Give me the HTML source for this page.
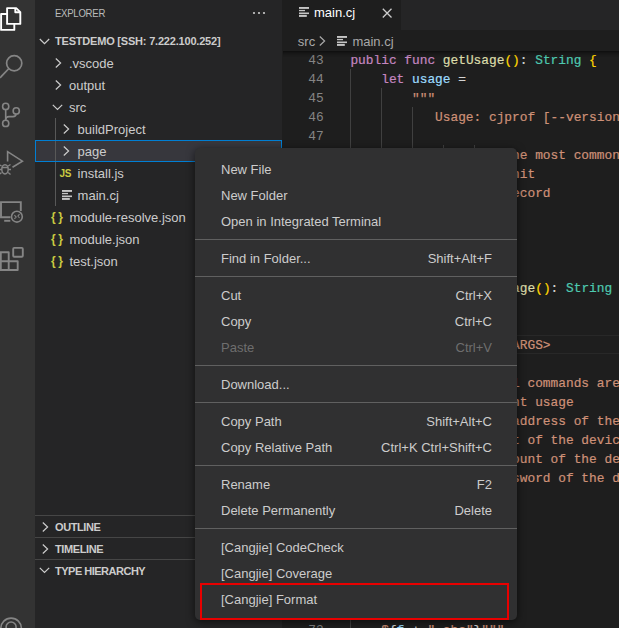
<!DOCTYPE html>
<html><head><meta charset="utf-8">
<style>
*{margin:0;padding:0;box-sizing:border-box}
html,body{width:619px;height:628px;overflow:hidden;background:#1e1e1e}
body{position:relative;font-family:"Liberation Sans",sans-serif;font-size:13px;color:#cccccc}
.abs{position:absolute}
#act{left:0;top:0;width:35px;height:628px;background:#333333}
#side{left:35px;top:0;width:247px;height:628px;background:#252526}
#editor{left:283px;top:0;width:336px;height:628px;background:#1e1e1e;overflow:hidden}
.t{position:absolute;margin-top:1px;white-space:nowrap;line-height:22px;height:22px}
.hdr{margin-top:0 !important;font-size:11px;font-weight:bold;color:#cccccc}
.sec{position:absolute;left:0;width:247px;height:22px;border-top:1px solid #464646}
.code{position:absolute;margin-top:1px;-webkit-text-stroke:0.2px;left:67.4px;font-family:"Liberation Mono",monospace;font-size:12.83px;white-space:pre;line-height:19px;height:19px;color:#d4d4d4}
.ln{position:absolute;margin-top:1px;left:0;width:40.6px;text-align:right;font-family:"Liberation Mono",monospace;font-size:12.83px;line-height:19px;height:19px;color:#858585}
.k{color:#c586c0}.f{color:#dcdcaa}.b{color:#ffd700}.ty{color:#4ec9b0}.v{color:#9cdcfe}.s{color:#ce9178}.p{color:#d4d4d4}
.g{position:absolute;width:1px;background:#404040}
#menu{left:195px;top:148px;width:322px;height:472px;background:#303031;border-radius:5px;box-shadow:0 2px 8px rgba(0,0,0,0.6)}
.mi{position:absolute;left:0;width:322px;height:26px;line-height:26px}
.mi .l{position:absolute;left:26px;top:1px}
.mi .r{position:absolute;right:25px;top:1px}
.mi.dis{color:#6e6e6e}
.sep{position:absolute;left:0;width:322px;height:1px;background:#606060}
#red{left:200px;top:583px;width:309px;height:37px;border:2.5px solid #e80000}
</style></head><body>
<div id="act" class="abs"><svg width="35" height="628" style="position:absolute;left:0;top:0">
<g fill="none" stroke="#ffffff" stroke-width="1.9" stroke-linejoin="round">
<path d="M7.1,8.1 H16.2 L20.3,12.2 V23.9 H7.1 Z"/>
<path d="M15.3,8.4 V12.3 H20" stroke-width="1.9"/>
<path d="M7.1,14 H1.1 V29.9 H14.3 V24"/>
</g>
<g fill="none" stroke="#858585" stroke-width="1.7">
<circle cx="14.2" cy="63.2" r="7.6"/>
<line x1="8.9" y1="68.5" x2="0" y2="77.8"/>
<circle cx="5.7" cy="106.4" r="3.1" stroke-width="1.6"/>
<circle cx="5.7" cy="123.4" r="3.1" stroke-width="1.6"/>
<circle cx="16.25" cy="110.9" r="3.1" stroke-width="1.6"/>
<path d="M5.7,109.5 V120.3" stroke-width="1.6"/>
<path d="M16.1,114 Q16,116.6 13,116.6 H9 Q5.8,116.6 5.7,119.5" stroke-width="1.6"/>
<path d="M7.6,161.5 V151.6 L22.4,161.2 L12.5,167.3" stroke-width="1.6" stroke-linejoin="miter"/>
<ellipse cx="5" cy="169.3" rx="3.2" ry="4.6" stroke-width="1.5"/>
<path d="M1.8,167.5 H8.2 M8.2,166 L10.5,164.5 M8.5,169.5 H11 M8.2,172.5 L10.5,174.5 M0,169.5 H1.8 M0,165 L1.5,166 M0,174 L1.5,172.5" stroke-width="1.3"/>
<path d="M10.5,217.2 H1 V202.1 H20.8 V211" stroke-width="1.9" stroke-linejoin="miter"/>
<path d="M4.2,220.8 H10.3" stroke-width="1.9"/>
<circle cx="16.9" cy="216.7" r="5.4" stroke-width="1.6"/>
<path d="M14.4,215.1 L16.2,217 L14.4,218.9 M19.5,214.2 L17.9,216.1 L19.5,218" stroke-width="1.1"/>
<rect x="13.2" y="247.9" width="9.6" height="8.8" rx="1" stroke-width="1.9"/>
<path d="M0,252.2 H8.7 V270 M0,261.2 H17.7 V270 H0" stroke-width="1.9" stroke-linejoin="round"/>
<path d="M0.8,252 V270" stroke-width="1.9"/>
<circle cx="11.1" cy="628.4" r="10.3" stroke-width="1.6"/>
<circle cx="11.1" cy="627" r="5" stroke-width="1.6"/>
</g></svg></div>
<div id="side" class="abs">
<div class="t" style="margin-top:0;left:20px;top:2px;font-size:11px;letter-spacing:-0.3px;transform:scaleX(0.87);transform-origin:0 0;color:#bbbbbb">EXPLORER</div>
<svg class="abs" style="left:217px;top:11px" width="14" height="4"><circle cx="2" cy="2" r="1.1" fill="#cccccc"/><circle cx="7" cy="2" r="1.1" fill="#cccccc"/><circle cx="12" cy="2" r="1.1" fill="#cccccc"/></svg>
<svg class="abs" style="left:4px;top:38px" width="12" height="8"><polyline points="0.8,1 5.5,5.7 10.2,1" fill="none" stroke="#cccccc" stroke-width="1.2"/></svg>
<div class="t hdr" style="left:20px;top:30px;letter-spacing:-0.2px">TESTDEMO [SSH: 7.222.100.252]</div>
<svg class="abs" style="left:20px;top:58px" width="8" height="11"><polyline points="0.8,0.5 5.6,5 0.8,9.5" fill="none" stroke="#cccccc" stroke-width="1.2"/></svg>
<div class="t" style="left:34px;top:52px">.vscode</div>
<svg class="abs" style="left:20px;top:80px" width="8" height="11"><polyline points="0.8,0.5 5.6,5 0.8,9.5" fill="none" stroke="#cccccc" stroke-width="1.2"/></svg>
<div class="t" style="left:34px;top:74px">output</div>
<svg class="abs" style="left:17px;top:104px" width="12" height="8"><polyline points="0.8,0.8 5.5,5.5 10.2,0.8" fill="none" stroke="#cccccc" stroke-width="1.2"/></svg>
<div class="t" style="left:34px;top:96px">src</div>
<div class="abs" style="left:20px;top:118px;width:1px;height:88px;background:#585858"></div>
<svg class="abs" style="left:28px;top:124px" width="8" height="11"><polyline points="0.8,0.5 5.6,5 0.8,9.5" fill="none" stroke="#cccccc" stroke-width="1.2"/></svg>
<div class="t" style="left:42.6px;top:118px">buildProject</div>
<div class="abs" style="left:0;top:140px;width:247px;height:22px;background:#37373d;border:1px solid #007fd4"></div>
<div class="abs" style="left:20px;top:141px;width:1px;height:20px;background:#585858"></div>
<svg class="abs" style="left:28px;top:146px" width="8" height="11"><polyline points="0.8,0.5 5.6,5 0.8,9.5" fill="none" stroke="#cccccc" stroke-width="1.2"/></svg>
<div class="t" style="left:42.6px;top:140px">page</div>
<div class="t" style="left:24.5px;top:162px;font-size:10px;font-weight:bold;color:#cbcb41;letter-spacing:-0.3px">JS</div>
<div class="t" style="left:42.6px;top:162px">install.js</div>
<svg class="abs" style="left:27px;top:190.1px" width="11" height="11"><g fill="#c5c5c5"><rect x="0" y="0" width="10" height="1.9"/><rect x="0" y="2.9" width="6" height="1.3"/><rect x="0" y="5.5" width="10" height="1.6"/><rect x="0" y="7.9" width="7.8" height="2"/></g></svg>
<div class="t" style="left:42.6px;top:184px">main.cj</div>
<div class="t" style="margin-top:0;left:16px;top:206px;font-size:12px;font-weight:bold;color:#cbcb41;letter-spacing:2.6px">{}</div>
<div class="t" style="left:34.4px;top:206px">module-resolve.json</div>
<div class="t" style="margin-top:0;left:16px;top:228px;font-size:12px;font-weight:bold;color:#cbcb41;letter-spacing:2.6px">{}</div>
<div class="t" style="left:34.4px;top:228px">module.json</div>
<div class="t" style="margin-top:0;left:16px;top:250px;font-size:12px;font-weight:bold;color:#cbcb41;letter-spacing:2.6px">{}</div>
<div class="t" style="left:34.4px;top:250px">test.json</div>
<div class="sec" style="top:515px"></div>
<svg class="abs" style="left:7px;top:522px" width="8" height="11"><polyline points="0.8,0.5 5.6,5 0.8,9.5" fill="none" stroke="#cccccc" stroke-width="1.2"/></svg>
<div class="t hdr" style="left:20px;top:516px;letter-spacing:-0.4px">OUTLINE</div>
<div class="sec" style="top:537px"></div>
<svg class="abs" style="left:7px;top:544px" width="8" height="11"><polyline points="0.8,0.5 5.6,5 0.8,9.5" fill="none" stroke="#cccccc" stroke-width="1.2"/></svg>
<div class="t hdr" style="left:20px;top:538px;letter-spacing:-0.4px">TIMELINE</div>
<div class="sec" style="top:559px"></div>
<svg class="abs" style="left:4px;top:567px" width="12" height="8"><polyline points="0.8,0.8 5.5,5.5 10.2,0.8" fill="none" stroke="#cccccc" stroke-width="1.2"/></svg>
<div class="t hdr" style="left:20px;top:560px;letter-spacing:-0.5px">TYPE HIERARCHY</div>
</div>
<div id="editor" class="abs">
<div class="abs" style="left:0;top:0;width:336px;height:30px;background:#252526"></div>
<div class="abs" style="left:0;top:0;width:118px;height:30px;background:#1e1e1e"></div>
<svg class="abs" style="left:16.1px;top:7.1px" width="11" height="11"><g fill="#c5c5c5"><rect x="0" y="0" width="10" height="1.9"/><rect x="0" y="2.9" width="6" height="1.3"/><rect x="0" y="5.5" width="10" height="1.6"/><rect x="0" y="7.9" width="7.8" height="2"/></g></svg>
<div class="t" style="margin-top:0;left:31px;top:2px;color:#ffffff">main.cj</div>
<svg class="abs" style="left:99px;top:8px" width="11" height="11"><path d="M0.8,0.8 L9.5,9.5 M9.5,0.8 L0.8,9.5" stroke="#cccccc" stroke-width="1.3"/></svg>
<div class="t" style="left:14.8px;top:30px;color:#a9a9a9">src</div>
<svg class="abs" style="left:36px;top:36px" width="8" height="11"><polyline points="0.8,0.5 5.6,5 0.8,9.5" fill="none" stroke="#a9a9a9" stroke-width="1.2"/></svg>
<svg class="abs" style="left:54.05px;top:35.9px" width="11" height="11"><g fill="#c5c5c5"><rect x="0" y="0" width="10" height="1.9"/><rect x="0" y="2.9" width="6" height="1.3"/><rect x="0" y="5.5" width="10" height="1.6"/><rect x="0" y="7.9" width="7.8" height="2"/></g></svg>
<div class="t" style="left:69.4px;top:30px;color:#a9a9a9">main.cj</div>
<div class="abs" style="left:0;top:335px;width:336px;height:19px;border-top:1px solid #282828;border-bottom:1px solid #282828"></div>
<div class="g" style="left:67.4px;top:69px;height:589px"></div>
<div class="g" style="left:98.2px;top:88px;height:532px"></div>
<div class="g" style="left:129.0px;top:107px;height:513px"></div>
<div class="g" style="left:159.8px;top:145px;height:76px"></div>
<div class="g" style="left:190.6px;top:145px;height:76px"></div>
<div class="ln" style="top:50px">43</div>
<div class="code" style="top:50px"><span class="k">public</span><span class="p"> </span><span class="k">func</span><span class="p"> </span><span class="f">getUsage</span><span class="b">()</span><span class="p">: </span><span class="ty">String</span><span class="p"> </span><span class="b">{</span></div>
<div class="ln" style="top:69px">44</div>
<div class="code" style="top:69px"><span class="p">    </span><span class="k">let</span><span class="p"> </span><span class="v">usage</span><span class="p"> =</span></div>
<div class="ln" style="top:88px">45</div>
<div class="code" style="top:88px"><span class="p">        </span><span class="s">&quot;&quot;&quot;</span></div>
<div class="ln" style="top:107px">46</div>
<div class="code" style="top:107px"><span class="p">           </span><span class="s">Usage: cjprof [--version] [--help]</span></div>
<div class="ln" style="top:126px">47</div>
<div class="code" style="top:126px"></div>
<div class="ln" style="top:145px">48</div>
<div class="code" style="top:145px"><span class="p">                    </span><span class="s">The most commonly used cjprof commands</span></div>
<div class="ln" style="top:164px">49</div>
<div class="code" style="top:164px"><span class="p">                    </span><span class="s">init</span></div>
<div class="ln" style="top:183px">50</div>
<div class="code" style="top:183px"><span class="p">                    </span><span class="s">record</span></div>
<div class="ln" style="top:202px">51</div>
<div class="code" style="top:202px"><span class="p">                    </span></div>
<div class="ln" style="top:221px">52</div>
<div class="code" style="top:221px"><span class="s">        &quot;&quot;&quot;</span></div>
<div class="ln" style="top:240px">53</div>
<div class="code" style="top:240px"><span class="p">    return usage</span></div>
<div class="ln" style="top:259px">54</div>
<div class="code" style="top:259px"><span class="b">}</span></div>
<div class="ln" style="top:278px">55</div>
<div class="code" style="top:278px"><span class="k">public</span><span class="p"> </span><span class="k">func</span><span class="p"> </span><span class="f">getInitUsage</span><span class="b">()</span><span class="p">: </span><span class="ty">String</span><span class="p"> </span><span class="b">{</span></div>
<div class="ln" style="top:297px">56</div>
<div class="code" style="top:297px"><span class="p">    </span><span class="k">let</span><span class="p"> </span><span class="v">usage</span><span class="p"> =</span></div>
<div class="ln" style="top:316px">57</div>
<div class="code" style="top:316px"><span class="p">        </span><span class="s">&quot;&quot;&quot;</span></div>
<div class="ln" style="top:335px">58</div>
<div class="code" style="top:335px"><span class="p">                    </span><span class="s">&lt;ARGS&gt;</span></div>
<div class="ln" style="top:354px">59</div>
<div class="code" style="top:354px"></div>
<div class="ln" style="top:373px">60</div>
<div class="code" style="top:373px"><span class="p">                   </span><span class="s">All commands are required</span></div>
<div class="ln" style="top:392px">61</div>
<div class="code" style="top:392px"><span class="p">                  </span><span class="s">Print usage</span></div>
<div class="ln" style="top:411px">62</div>
<div class="code" style="top:411px"><span class="p">                  </span><span class="s">IP address of the device</span></div>
<div class="ln" style="top:430px">63</div>
<div class="code" style="top:430px"><span class="p">                  </span><span class="s">port of the device</span></div>
<div class="ln" style="top:449px">64</div>
<div class="code" style="top:449px"><span class="p">                  </span><span class="s">account of the device</span></div>
<div class="ln" style="top:468px">65</div>
<div class="code" style="top:468px"><span class="p">                  </span><span class="s">password of the device</span></div>
<div class="ln" style="top:487px">66</div>
<div class="code" style="top:487px"></div>
<div class="ln" style="top:506px">67</div>
<div class="code" style="top:506px"></div>
<div class="ln" style="top:525px">68</div>
<div class="code" style="top:525px"></div>
<div class="ln" style="top:544px">69</div>
<div class="code" style="top:544px"></div>
<div class="ln" style="top:563px">70</div>
<div class="code" style="top:563px"></div>
<div class="ln" style="top:582px">71</div>
<div class="code" style="top:582px"></div>
<div class="ln" style="top:601px">72</div>
<div class="code" style="top:601px"></div>
<div class="ln" style="top:620px">73</div>
<div class="code" style="top:620px"><span class="p">    </span><span class="s">$</span><span class="p">{</span><span class="v">f</span><span class="p"> + </span><span class="s">&quot; abc&quot;</span><span class="p">}</span><span class="s">&quot;&quot;&quot;</span></div>
<div class="abs" style="left:0;top:51px;width:336px;height:6px;box-shadow:inset 0 6px 6px -6px #000000"></div>
</div>
<div class="abs" style="left:282px;top:0;width:1px;height:628px;background:#1e1e1e"></div>
<div id="menu" class="abs">
<div class="mi" style="top:8px"><span class="l">New File</span></div>
<div class="mi" style="top:34px"><span class="l">New Folder</span></div>
<div class="mi" style="top:60px"><span class="l">Open in Integrated Terminal</span></div>
<div class="sep" style="top:91px"></div>
<div class="mi" style="top:97px"><span class="l">Find in Folder...</span><span class="r">Shift+Alt+F</span></div>
<div class="sep" style="top:128px"></div>
<div class="mi" style="top:134px"><span class="l">Cut</span><span class="r">Ctrl+X</span></div>
<div class="mi" style="top:160px"><span class="l">Copy</span><span class="r">Ctrl+C</span></div>
<div class="mi dis" style="top:186px"><span class="l">Paste</span><span class="r">Ctrl+V</span></div>
<div class="sep" style="top:217px"></div>
<div class="mi" style="top:223px"><span class="l">Download...</span></div>
<div class="sep" style="top:254px"></div>
<div class="mi" style="top:260px"><span class="l">Copy Path</span><span class="r">Shift+Alt+C</span></div>
<div class="mi" style="top:286px"><span class="l">Copy Relative Path</span><span class="r">Ctrl+K Ctrl+Shift+C</span></div>
<div class="sep" style="top:317px"></div>
<div class="mi" style="top:323px"><span class="l">Rename</span><span class="r">F2</span></div>
<div class="mi" style="top:349px"><span class="l">Delete Permanently</span><span class="r">Delete</span></div>
<div class="sep" style="top:380px"></div>
<div class="mi" style="top:386px"><span class="l">[Cangjie] CodeCheck</span></div>
<div class="mi" style="top:412px"><span class="l">[Cangjie] Coverage</span></div>
<div class="mi" style="top:438px"><span class="l">[Cangjie] Format</span></div>
</div>
<div id="red" class="abs"></div>
</body></html>
